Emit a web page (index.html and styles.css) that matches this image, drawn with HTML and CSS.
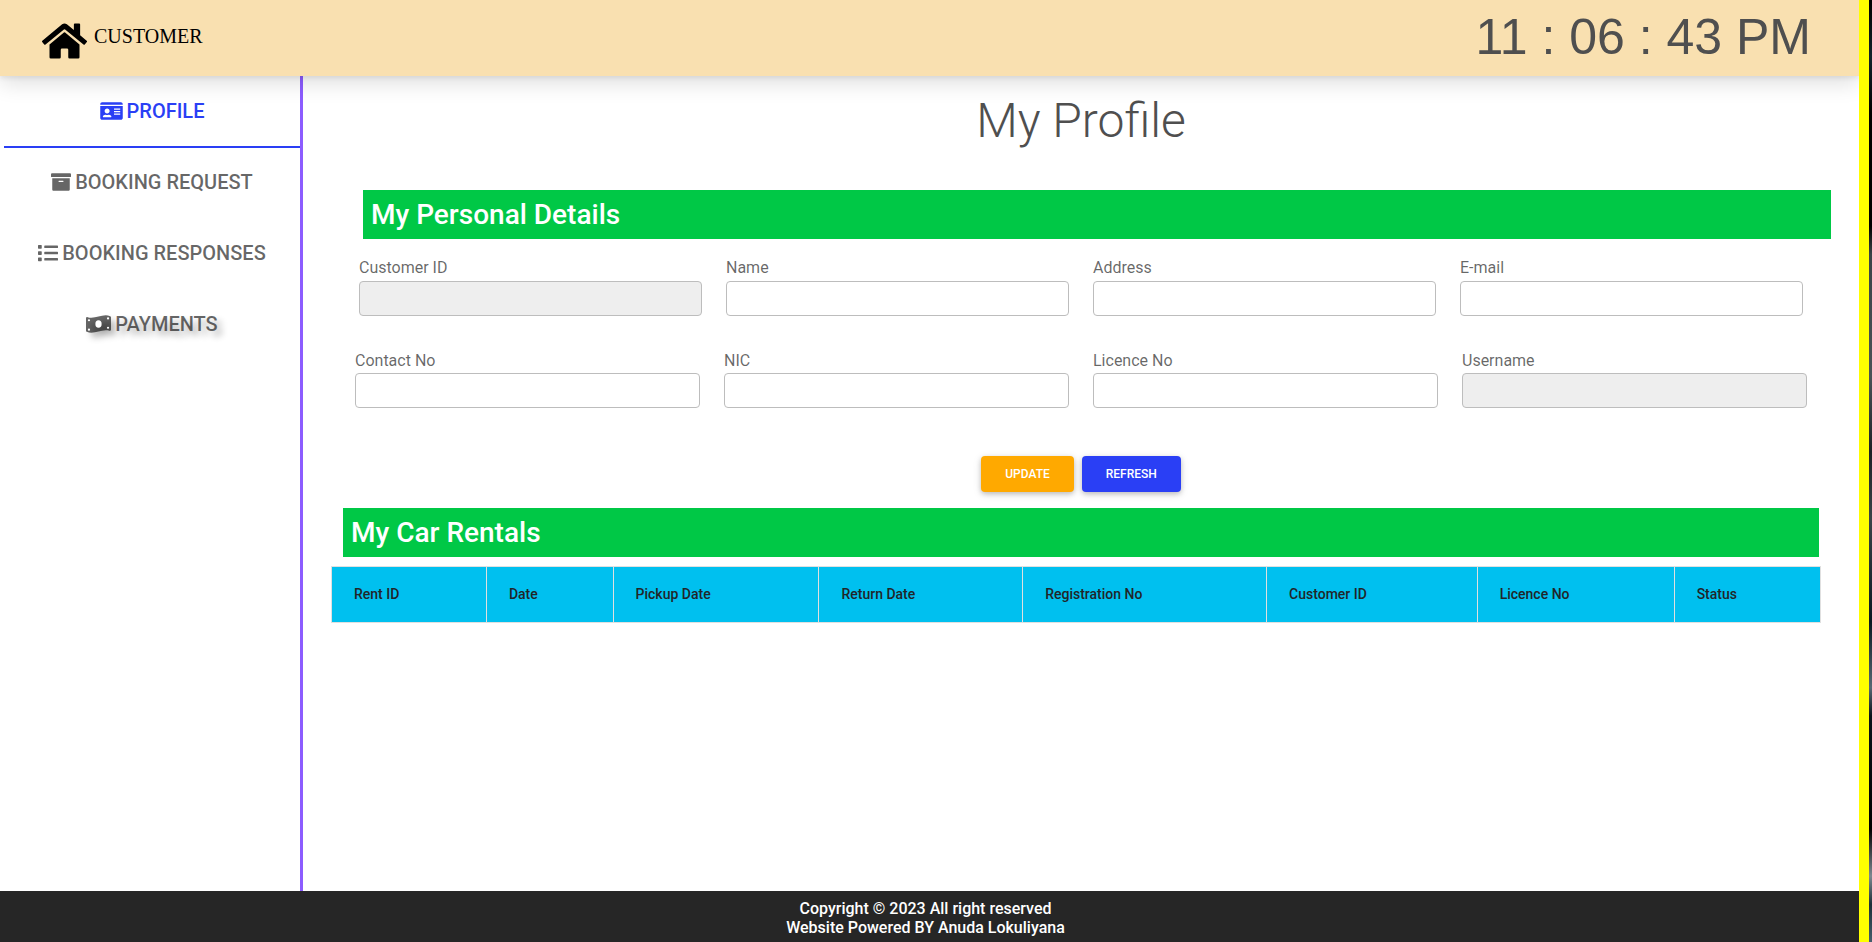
FILE: index.html
```html
<!DOCTYPE html>
<html lang="en">
<head>
<meta charset="utf-8">
<title>My Profile</title>
<link rel="stylesheet" href="styles.css">
</head>
<body>
<div class="app">
  <header class="topbar">
    <a class="brand" href="#">
      <svg class="brand-icon" viewBox="0 0 576 512" aria-hidden="true"><path d="M280.37 148.26L96 300.11V464a16 16 0 0 0 16 16l112.06-.29a16 16 0 0 0 15.92-16V368a16 16 0 0 1 16-16h64a16 16 0 0 1 16 16v95.64a16 16 0 0 0 16 16.05L464 480a16 16 0 0 0 16-16V300L295.67 148.26a12.19 12.19 0 0 0-15.3 0zM571.6 251.47L488 182.56V44.05a12 12 0 0 0-12-12h-56a12 12 0 0 0-12 12v72.61L318.47 43a48 48 0 0 0-61 0L4.34 251.47a12 12 0 0 0-1.6 16.9l25.5 31A12 12 0 0 0 45.15 301l235.22-193.74a12.19 12.19 0 0 1 15.3 0L530.9 301a12 12 0 0 0 16.9-1.6l25.5-31a12 12 0 0 0-1.7-16.93z"/></svg>
      <span class="brand-name">CUSTOMER</span>
    </a>
    <div class="clock">11 : 06 : 43 PM</div>
  </header>
  <div class="body">
    <nav class="sidebar">
      <a class="nav-item active" href="#">
        <svg class="icon icon-card" viewBox="0 0 576 512" aria-hidden="true"><path d="M528 32H48C21.5 32 0 53.5 0 80v16h576V80c0-26.5-21.5-48-48-48zM0 432c0 26.5 21.5 48 48 48h480c26.5 0 48-21.5 48-48V128H0v304zm352-232c0-4.4 3.6-8 8-8h144c4.4 0 8 3.6 8 8v16c0 4.4-3.6 8-8 8H360c-4.4 0-8-3.6-8-8v-16zm0 64c0-4.4 3.6-8 8-8h144c4.4 0 8 3.6 8 8v16c0 4.4-3.6 8-8 8H360c-4.4 0-8-3.6-8-8v-16zm0 64c0-4.4 3.6-8 8-8h144c4.4 0 8 3.6 8 8v16c0 4.4-3.6 8-8 8H360c-4.4 0-8-3.6-8-8v-16zM176 192c35.3 0 64 28.7 64 64s-28.7 64-64 64-64-28.7-64-64 28.7-64 64-64zM67.1 396.2C75.5 370.5 99.6 352 128 352h8.2c12.3 5.1 25.7 8 39.8 8s27.6-2.9 39.8-8h8.2c28.4 0 52.5 18.5 60.9 44.2 3.2 9.9-5.2 19.8-15.6 19.8H82.7c-10.4 0-18.8-10-15.6-19.8z"/></svg>
        <span>PROFILE</span>
      </a>
      <a class="nav-item" href="#">
        <svg class="icon" viewBox="0 0 512 512" aria-hidden="true"><path d="M32 448c0 17.7 14.3 32 32 32h384c17.7 0 32-14.3 32-32V160H32v288zm160-212c0-6.6 5.4-12 12-12h104c6.6 0 12 5.4 12 12v8c0 6.6-5.4 12-12 12H204c-6.6 0-12-5.4-12-12v-8zM480 32H32C14.3 32 0 46.3 0 64v48c0 8.8 7.2 16 16 16h480c8.8 0 16-7.2 16-16V64c0-17.7-14.3-32-32-32z"/></svg>
        <span>BOOKING REQUEST</span>
      </a>
      <a class="nav-item" href="#">
        <svg class="icon" viewBox="0 0 512 512" aria-hidden="true"><path d="M80 368H16a16 16 0 0 0-16 16v64a16 16 0 0 0 16 16h64a16 16 0 0 0 16-16v-64a16 16 0 0 0-16-16zm0-320H16A16 16 0 0 0 0 64v64a16 16 0 0 0 16 16h64a16 16 0 0 0 16-16V64a16 16 0 0 0-16-16zm0 160H16a16 16 0 0 0-16 16v64a16 16 0 0 0 16 16h64a16 16 0 0 0 16-16v-64a16 16 0 0 0-16-16zm416 176H176a16 16 0 0 0-16 16v32a16 16 0 0 0 16 16h320a16 16 0 0 0 16-16v-32a16 16 0 0 0-16-16zm0-320H176a16 16 0 0 0-16 16v32a16 16 0 0 0 16 16h320a16 16 0 0 0 16-16V80a16 16 0 0 0-16-16zm0 160H176a16 16 0 0 0-16 16v32a16 16 0 0 0 16 16h320a16 16 0 0 0 16-16v-32a16 16 0 0 0-16-16z"/></svg>
        <span>BOOKING RESPONSES</span>
      </a>
      <a class="nav-item hovered" href="#">
        <svg class="icon icon-money" viewBox="0 0 640 512" aria-hidden="true"><path d="M621.16 54.46C582.37 38.19 543.55 32 504.75 32c-123.17-.01-246.33 62.34-369.5 62.34-30.89 0-61.76-3.92-92.65-13.72-3.47-1.1-6.95-1.62-10.35-1.62C15.04 79 0 92.32 0 110.81v317.26c0 12.63 7.23 24.6 18.84 29.46C57.63 473.81 96.45 480 135.25 480c123.17 0 246.34-62.35 369.51-62.35 30.89 0 61.76 3.92 92.65 13.72 3.47 1.1 6.95 1.62 10.35 1.62 17.21 0 32.25-13.32 32.25-31.81V83.93c-.01-12.64-7.24-24.6-18.85-29.47z"/><ellipse class="icon-hole" cx="320" cy="256" rx="80" ry="96"/><circle class="icon-hole" cx="76" cy="160" r="28"/><circle class="icon-hole" cx="76" cy="400" r="28"/><circle class="icon-hole" cx="564" cy="112" r="28"/><circle class="icon-hole" cx="564" cy="352" r="28"/></svg>
        <span>PAYMENTS</span>
      </a>
    </nav>
    <main class="content">
      <h1 class="title">My Profile</h1>
      <h3 class="section-bar details-bar">My Personal Details</h3>
      <form class="details">
        <div class="fields">
          <div class="field"><label for="cid">Customer ID</label><input id="cid" type="text" disabled></div>
          <div class="field"><label for="name">Name</label><input id="name" type="text"></div>
          <div class="field"><label for="address">Address</label><input id="address" type="text"></div>
          <div class="field"><label for="email">E-mail</label><input id="email" type="email"></div>
        </div>
        <div class="fields fields-wide">
          <div class="field"><label for="contact">Contact No</label><input id="contact" type="text"></div>
          <div class="field"><label for="nic">NIC</label><input id="nic" type="text"></div>
          <div class="field"><label for="licence">Licence No</label><input id="licence" type="text"></div>
          <div class="field"><label for="username">Username</label><input id="username" type="text" disabled></div>
        </div>
        <div class="actions">
          <button class="btn btn-update" type="button">UPDATE</button>
          <button class="btn btn-refresh" type="button">REFRESH</button>
        </div>
      </form>
      <h3 class="section-bar rentals-bar">My Car Rentals</h3>
      <div class="table-wrap">
        <table class="rentals">
          <thead>
            <tr><th>Rent ID</th><th>Date</th><th>Pickup Date</th><th>Return Date</th><th>Registration No</th><th>Customer ID</th><th>Licence No</th><th>Status</th></tr>
          </thead>
        </table>
      </div>
    </main>
  </div>
  <footer class="footer">Copyright © 2023 All right reserved<br>Website Powered BY Anuda Lokuliyana</footer>
</div>
</body>
</html>
```
FILE: styles.css
```css
* { box-sizing: border-box; }

html {
  background: linear-gradient(#000, #12242c 6%, #000 12%, #000 24%, #3a4448 27%, #4a5256 40%, #1c2226 48%, #3a4448 55%, #0a1a22 66%, #566874 73%, #0a141a 76%, #000 88%, #7d8890 93%, #1c3038 96%, #445e6c);
}

body {
  margin: 0;
  font-family: Roboto, sans-serif;
  font-size: 16px;
  color: #4f4f4f;
}

.app {
  display: flex;
  flex-direction: column;
  min-height: 100vh;
  margin-right: 3px;
  border-right: 10px solid #ff0;
  background: #fff;
}

.topbar {
  display: flex;
  align-items: center;
  justify-content: space-between;
  height: 76px;
  padding: 0 48px 2px 42px;
  background: #f9e0b0;
  box-shadow: 0 2px 5px rgba(0, 0, 0, .08), 0 8px 20px rgba(0, 0, 0, .12);
  clip-path: inset(0 0 -40px 0);
  z-index: 1;
}

.brand {
  display: flex;
  align-items: center;
  gap: 7px;
  color: #000;
  font: 20px "Liberation Serif", serif;
  text-decoration: none;
}

.brand-icon {
  width: 45px;
  height: 40px;
  margin-top: 8px;
}

.brand-name { margin-bottom: 2px; }

.clock {
  font: 50px/1 "Liberation Sans", sans-serif;
}

.body {
  display: flex;
  flex: 1;
}

.sidebar {
  width: 303px;
  padding: 1px 0 0 4px;
  border-right: 3px solid #8c5cff;
}

.nav-item {
  display: flex;
  align-items: center;
  justify-content: center;
  gap: 4px;
  height: 71px;
  padding-bottom: 2px;
  border-bottom: 2px solid transparent;
  color: rgba(0, 0, 0, .6);
  font-size: 20px;
  font-weight: 500;
  text-decoration: none;
}

.nav-item.active {
  color: #2a3ff5;
  border-bottom-color: #2a3ff5;
}

.nav-item.hovered {
  text-shadow: 5px 5px 6px rgba(0, 0, 0, .3);
}

.icon {
  width: 20px;
  height: 20px;
  fill: currentColor;
}

.icon-card { width: 23px; }

.icon-money {
  width: 25px;
  filter: drop-shadow(5px 5px 3px rgba(0, 0, 0, .4));
}

.icon-hole { fill: #fff; }

.content {
  flex: 1;
  min-width: 0;
  padding: 16px 38px 0 28px;
}

.title {
  margin: 0 -10px 40px 0;
  font-size: 48px;
  font-weight: 300;
  line-height: 58px;
  text-align: center;
}

.section-bar {
  margin: 0;
  padding: 8px;
  background: #00c846;
  color: #fff;
  font-size: 28px;
  font-weight: 500;
  line-height: 33px;
}

.details-bar { margin: 0 -10px 0 32px; }

.rentals-bar { margin: 16px 2px 9px 12px; }

.details { padding: 16px 14px 0 24px; }

.fields {
  display: grid;
  grid-template-columns: repeat(4, 1fr);
  gap: 24px;
  margin: 0 4px 33px;
}

.fields-wide { margin: 0 0 48px; }

.field label {
  display: block;
  line-height: 26px;
  color: rgba(0, 0, 0, .6);
}

.fields-wide label { line-height: 24px; }

.field input {
  display: block;
  width: 100%;
  height: 35px;
  padding: 5px 12px;
  border: 1px solid #bdbdbd;
  border-radius: 4px;
  background: #fff;
  font: inherit;
}

.field input:disabled { background: #eee; }

.actions {
  display: flex;
  justify-content: center;
  gap: 8px;
}

.btn {
  height: 36px;
  padding: 0 24px;
  border: 0;
  border-radius: 4px;
  color: #fff;
  font: 500 12px Roboto, sans-serif;
  box-shadow: 0 2px 5px rgba(0, 0, 0, .2), 0 2px 10px rgba(0, 0, 0, .1);
}

.btn-update { background: #ffa900; }

.btn-refresh { background: #2a3ff5; }

.rentals {
  width: 100%;
  border-collapse: collapse;
  background: #00c0ef;
  color: #212529;
  font-size: 14px;
}

.rentals th {
  padding: 17px 22px;
  border: 1px solid #e0e0e0;
  font-weight: 500;
  line-height: 21px;
  text-align: left;
}

.footer {
  padding: 8px 8px 5px 0;
  background: #262626;
  color: #fff;
  font-weight: 500;
  line-height: 19px;
  text-align: center;
}
```
